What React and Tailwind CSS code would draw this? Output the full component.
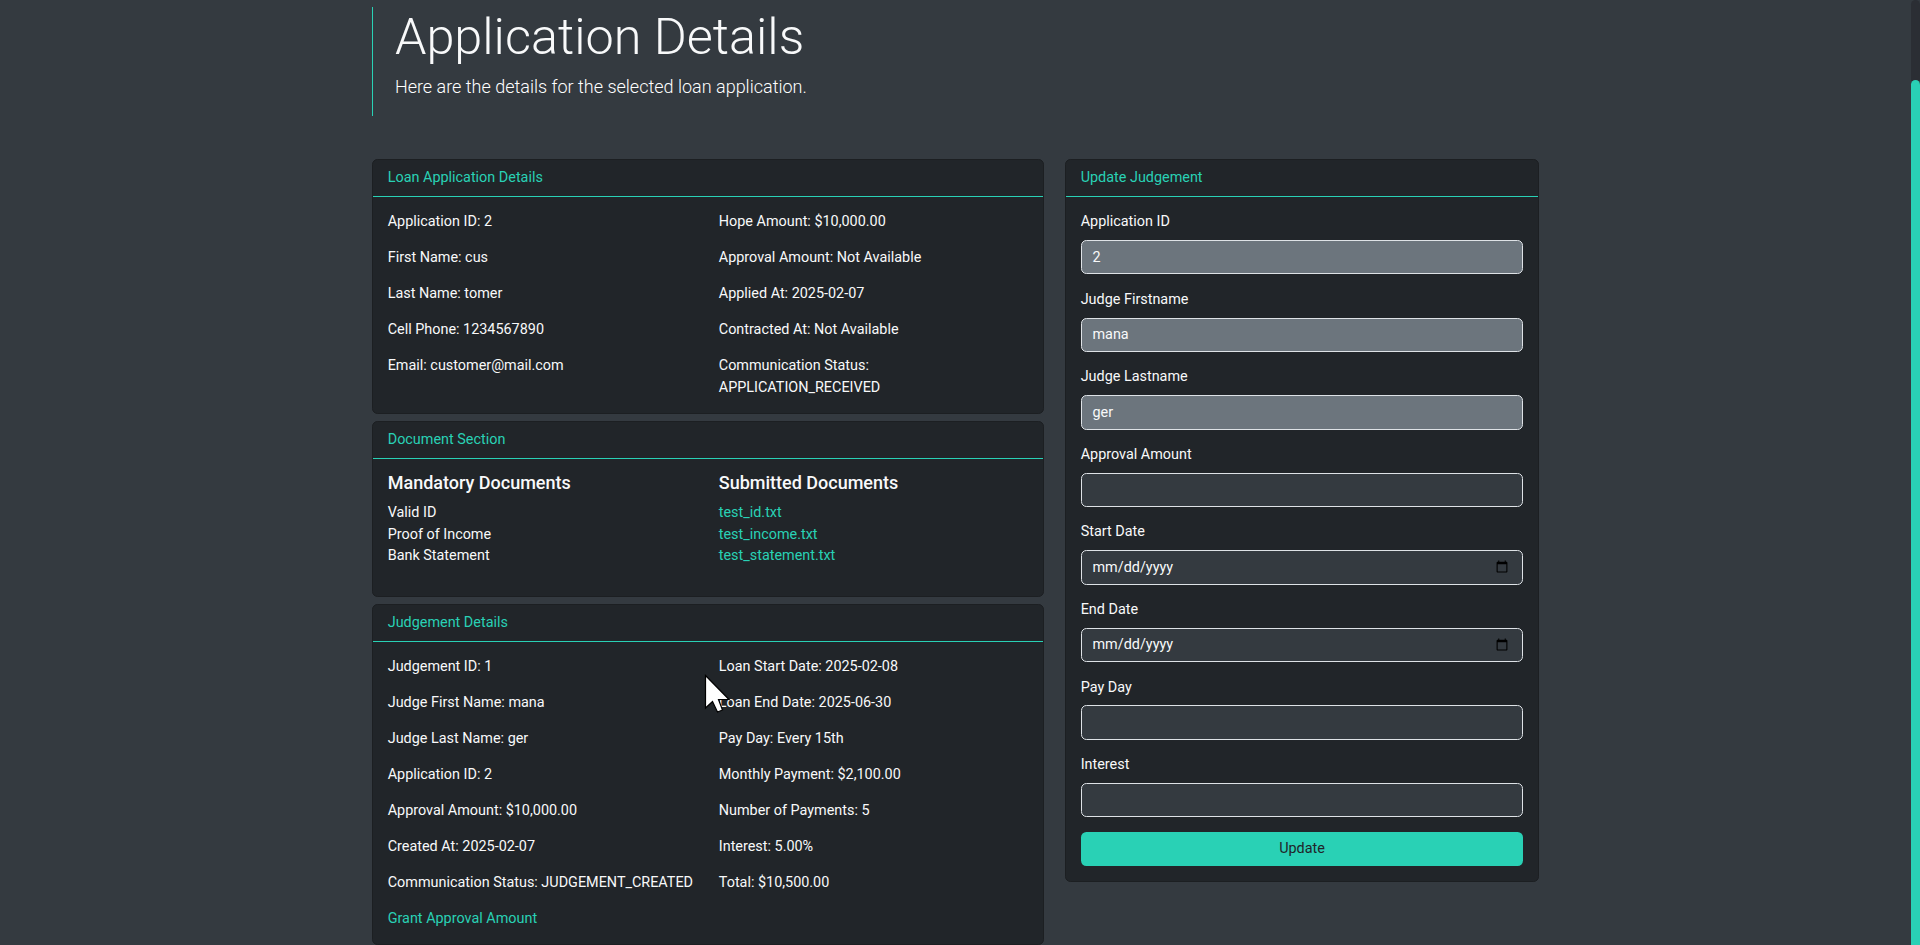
const loanLeft = [
  "Application ID: 2",
  "First Name: cus",
  "Last Name: tomer",
  "Cell Phone: 1234567890",
  "Email: customer@mail.com",
];
const loanRight = [
  "Hope Amount: $10,000.00",
  "Approval Amount: Not Available",
  "Applied At: 2025-02-07",
  "Contracted At: Not Available",
  "Communication Status: APPLICATION_RECEIVED",
];
const judgeLeft = [
  "Judgement ID: 1",
  "Judge First Name: mana",
  "Judge Last Name: ger",
  "Application ID: 2",
  "Approval Amount: $10,000.00",
  "Created At: 2025-02-07",
  "Communication Status: JUDGEMENT_CREATED",
];
const judgeRight = [
  "Loan Start Date: 2025-02-08",
  "Loan End Date: 2025-06-30",
  "Pay Day: Every 15th",
  "Monthly Payment: $2,100.00",
  "Number of Payments: 5",
  "Interest: 5.00%",
  "Total: $10,500.00",
];
const fields = [
  { label: "Application ID", value: "2", disabled: true },
  { label: "Judge Firstname", value: "mana", disabled: true },
  { label: "Judge Lastname", value: "ger", disabled: true },
  { label: "Approval Amount" },
  { label: "Start Date", type: "date" },
  { label: "End Date", type: "date" },
  { label: "Pay Day" },
  { label: "Interest" },
];

function Card({ title, children }) {
  return (
    <section className="rounded-[5.4px] border border-[#1c1f22] bg-[#212529]">
      <header className="border-b border-[#29d1b5] px-[14.4px] py-[7.2px] text-[#29d1b5]">{title}</header>
      <div className="p-[14.4px]">{children}</div>
    </section>
  );
}

function Rows({ items, children }) {
  return (
    <div className="flex flex-col gap-[14.4px]">
      {items.map((item) => (
        <p key={item}>{item}</p>
      ))}
      {children}
    </div>
  );
}

function Field({ label, value, disabled, type = "text" }) {
  return (
    <div>
      <label className="mb-[7.2px] block">{label}</label>
      <input
        type={type}
        defaultValue={value}
        disabled={disabled}
        className="block h-[34.4px] w-full rounded-[5.4px] border border-[#dee2e6] bg-[#343a40] px-[10.8px] py-[5.4px] leading-[21.6px] text-[#f8f9fa] disabled:bg-[#6c757d] [&::-webkit-datetime-edit-day-field]:p-0 [&::-webkit-datetime-edit-month-field]:p-0 [&::-webkit-datetime-edit-year-field]:p-0"
      />
    </div>
  );
}

export default function App() {
  return (
    <div className="relative flex h-[945px] overflow-hidden bg-[#343a40] font-['Roboto',sans-serif] text-[14.4px] leading-[21.6px] text-[#f8f9fa]">
      <div className="flex-1">
        <main className="mx-auto w-[1166.4px] pt-[6.6px]">
          <div className="mb-[43.2px] border-l border-[#29d1b5] pb-[16px] pl-[21.6px]">
            <h1 className="mb-[5.6px] text-[50.4px] leading-[60.48px] font-light">Application Details</h1>
            <p className="text-[18px] leading-[27px] font-light text-white">Here are the details for the selected loan application.</p>
          </div>
          <div className="flex items-start gap-[21.6px]">
            <div className="flex w-[671.4px] flex-col gap-[7.2px]">
              <Card title="Loan Application Details">
                <div className="grid grid-cols-2 gap-x-[21.6px]">
                  <Rows items={loanLeft} />
                  <div className="pr-[100px]">
                    <Rows items={loanRight} />
                  </div>
                </div>
              </Card>
              <Card title="Document Section">
                <div className="grid grid-cols-2 gap-x-[21.6px] pb-[14.4px]">
                  <div>
                    <h5 className="mb-[8.8px] text-[18px] leading-[20px] font-medium">Mandatory Documents</h5>
                    <ul>
                      <li>Valid ID</li>
                      <li>Proof of Income</li>
                      <li>Bank Statement</li>
                    </ul>
                  </div>
                  <div>
                    <h5 className="mb-[8.8px] text-[18px] leading-[20px] font-medium">Submitted Documents</h5>
                    <ul className="text-[#29d1b5]">
                      <li>test_id.txt</li>
                      <li>test_income.txt</li>
                      <li>test_statement.txt</li>
                    </ul>
                  </div>
                </div>
              </Card>
              <Card title="Judgement Details">
                <div className="grid grid-cols-2 gap-x-[21.6px]">
                  <Rows items={judgeLeft}>
                    <a className="text-[#29d1b5]">Grant Approval Amount</a>
                  </Rows>
                  <Rows items={judgeRight} />
                </div>
              </Card>
            </div>
            <div className="w-[473.4px]">
              <Card title="Update Judgement">
                <form className="flex flex-col gap-[14.4px]">
                  {fields.map((field) => (
                    <Field key={field.label} {...field} />
                  ))}
                  <button type="button" className="h-[34.4px] rounded-[5.4px] bg-[#29d1b5] text-[#212529]">
                    Update
                  </button>
                </form>
              </Card>
            </div>
          </div>
        </main>
      </div>
      <div className="w-[9px] rounded-t-full bg-[#2b2e34] pt-[80px]">
        <div className="h-full rounded-t-full bg-[#29d1b5]" />
      </div>
      <svg className="absolute top-[674px] left-[704px]" width="27" height="40" viewBox="0 0 27 40">
        <path d="M1.5 1.5V34L8.5 27.5L13.5 38L18.5 36L14.5 25.5H25Z" fill="#fff" stroke="#000" strokeWidth="1.2" />
      </svg>
    </div>
  );
}
